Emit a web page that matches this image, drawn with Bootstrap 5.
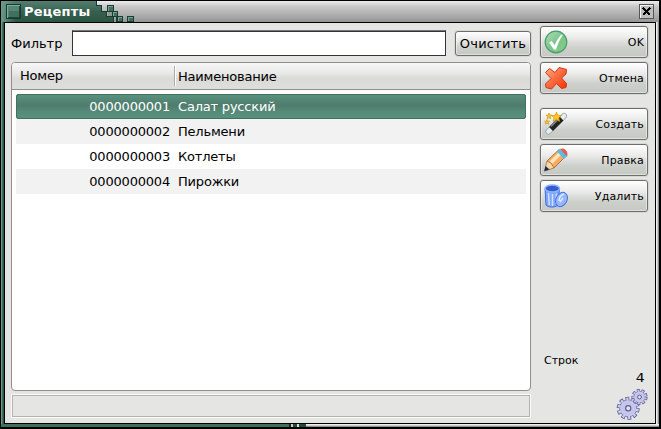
<!DOCTYPE html>
<html lang="ru">
<head>
<meta charset="utf-8">
<title>Рецепты</title>
<link href="https://cdn.jsdelivr.net/npm/bootstrap@5.3.0/dist/css/bootstrap.min.css" rel="stylesheet">
<style>
body{width:661px;height:429px;background:#000;overflow:hidden;font:13px/15px "DejaVu Sans",sans-serif;letter-spacing:-.2px;color:#000}
.win{width:661px;height:429px;padding:1px 2px 2px 1px}
.titlebar{height:21px;background:linear-gradient(#ededed 0,#c9c9c9 25%,#a4a4a4 80%,#959595)}
.titlebar-name{width:95px;padding-left:5px;background:linear-gradient(90deg,#6c9a8a,transparent 15px),linear-gradient(#547f70,#37604f 50%,#2c5445);color:#fff;font-weight:700;letter-spacing:.2px}
.menu-box{width:15px;height:15px;margin-right:3px}
.pixels{width:40px;height:21px}
.close-box{width:15px;height:15px;margin-right:5px}
.frame-l{width:3px;background:linear-gradient(90deg,#6a9a8a 1px,#41705f 1px 2px,#2d5647 2px)}
.frame-r{width:3px;background:linear-gradient(90deg,#eee 1px,#ccc 1px 2px,#8e8e8e 2px)}
.frame-b{height:3px;background:linear-gradient(90deg,#3f6f5e 288px,#222 288px 290px,#ccc 290px 292px,#234b3d 292px 296px,#ddd 296px 298px,#234b3d 298px 305px,transparent 305px),linear-gradient(#eee 1px,#ccc 1px 2px,#8e8e8e 2px)}
.client{height:402px;border:1px solid #000;background:#e5e5e3;padding:3px 7px 4px 6px}
.left-pane{width:520px;padding-top:4px}
.filter-label{letter-spacing:0}
.filter-input{width:374px;height:26px;margin-right:9px;border:1px solid #32333f;border-top-color:#777;background:#fff;outline:0;box-shadow:inset 0 1px #32333f}
.push{border:1px solid #6d706a;border-radius:3px;background:linear-gradient(#fff,#ebebea 35%,#cccfca 70%,#c6c9c3);box-shadow:inset 0 0 0 1px rgba(255,255,255,.45),0 0 0 1px rgba(0,0,0,.06);color:#000;padding:0}
.push-clear{width:76px;height:25px;letter-spacing:.2px}
.push-side{width:108px;height:32px;font-size:11px;padding:0 3px;letter-spacing:.15px}
.push-side svg{width:24px;height:24px}
.grid-box{width:520px;height:329px;margin-top:6px;border:1px solid #8f8f8c;border-radius:4px;background:#fff}
.grid-head{height:27px;background:linear-gradient(#f7f7f7,#e8e8e7 40%,#dadad8 60%,#dededc);border-bottom:1px solid #8f8f8c;border-radius:3px 3px 0 0}
.head-num{width:163px;padding-left:8px;border-right:1px solid #aaa;height:20px;line-height:20px;box-shadow:1px 0 #fff}
.head-name{padding-left:3px}
.grid-body{padding:4px}
.line{height:25px}
.line:nth-child(even){background:#f2f2f2}
.line-num{width:154px;text-align:right}
.line-name{padding-left:8px}
.line.picked{color:#fff;border-radius:3px;background:linear-gradient(#5a9380,#4f7c6c 45%,#568a79 70%,#5a9380);box-shadow:inset 0 0 0 1px #426f60}
.status{height:24px;margin-top:3px;border:1px solid #fbfbfb;box-shadow:inset 0 0 0 1px #b3b3b1}
.side{width:108px}
.actions{margin-top:14px}
.small-label{font-size:11px;padding-left:4px;margin-bottom:2px;letter-spacing:0}
.count{font-size:12.5px;padding-right:3px;margin-bottom:4px;transform:scaleX(1.12);transform-origin:right}
.gears{width:32px;height:32px;margin-bottom:-2px}
</style>
<script src="https://cdn.jsdelivr.net/npm/bootstrap@5.3.0/dist/js/bootstrap.bundle.min.js"></script>
</head>
<body>
<div class="win d-flex flex-column">
 <header class="titlebar d-flex align-items-center">
  <div class="titlebar-name d-flex align-items-center h-100">
   <svg class="menu-box" viewBox="0 0 15 15" shape-rendering="crispEdges"><path fill="#163a2e" d="M0 0h15v15H0z"/><path fill="#82ab9c" d="M1 1h13v13H1z"/><path fill="#1d4437" d="M2 2h12v12H2z"/><path fill="#548674" d="M2 2h11v11H2z"/><path fill="#41705f" d="M3 7h10v6H3z"/></svg>
   <span>Рецепты</span>
  </div>
  <svg class="pixels" viewBox="0 0 40 21" shape-rendering="crispEdges">
   <defs><linearGradient id="edge" x2="0" y2="1"><stop stop-color="#547f70"/><stop offset=".5" stop-color="#37604f"/><stop offset="1" stop-color="#2c5445"/></linearGradient></defs>
   <path fill="#173b2e" d="M0 0h1v4h5v6h5v5h7v6H0z"/>
   <path fill="url(#edge)" d="M0 0v21h17v-5h-7v-5H5V5H0z"/>
   <g fill="#193e30"><path d="M11 4h7v7h-7zM16 10h6v6h-6zM20 15h7v6h-7zM31 15h7v6h-7z"/></g>
   <path fill="#8e9793" d="M12 11h4v4h-4z"/>
   <g fill="#74a293"><path d="M12 5h5v5h-5zM17 11h4v4h-4zM22 16h4v4h-4zM32 16h5v4h-5z"/></g>
   <g fill="#41705f"><path d="M13 6h4v4h-4zM18 12h3v3h-3zM23 17h3v3h-3zM33 17h4v3h-4z"/></g>
  </svg>
  <svg class="close-box ms-auto" viewBox="0 0 15 15" shape-rendering="crispEdges"><path fill="#555" d="M0 0h15v15H0z"/><path fill="#f4f4f4" d="M1 1h13v13H1z"/><path fill="#bcbcbc" d="M2 2h12v12H2z"/><path stroke="#000" stroke-width="2.6" d="M4 4l7 7M11 4l-7 7"/></svg>
 </header>
 <div class="d-flex">
  <div class="frame-l"></div>
  <main class="client flex-grow-1 d-flex justify-content-between">
   <section class="left-pane">
    <div class="d-flex align-items-center">
     <label class="filter-label" for="filter">Фильтр</label>
     <input id="filter" class="filter-input ms-auto">
     <button class="push push-clear">Очистить</button>
    </div>
    <div class="grid-box">
     <div class="grid-head d-flex align-items-center"><div class="head-num">Номер</div><div class="head-name">Наименование</div></div>
     <div class="grid-body">
      <div class="line picked d-flex align-items-center"><div class="line-num">0000000001</div><div class="line-name">Салат русский</div></div>
      <div class="line d-flex align-items-center"><div class="line-num">0000000002</div><div class="line-name">Пельмени</div></div>
      <div class="line d-flex align-items-center"><div class="line-num">0000000003</div><div class="line-name">Котлеты</div></div>
      <div class="line d-flex align-items-center"><div class="line-num">0000000004</div><div class="line-name">Пирожки</div></div>
     </div>
    </div>
    <div class="status"></div>
   </section>
   <aside class="side d-flex flex-column">
    <div class="d-flex flex-column gap-1">
     <button class="push push-side d-flex align-items-center justify-content-between">
      <svg viewBox="0 0 24 24"><defs><linearGradient id="ok" x2="1" y2="1"><stop stop-color="#b4dfb9"/><stop offset=".5" stop-color="#79c58c"/><stop offset="1" stop-color="#8bca84"/></linearGradient></defs><circle cx="12" cy="12" r="10.8" fill="url(#ok)" stroke="#459c69" stroke-width="1.2"/><path fill="#fff" d="M5 12.5l2.800-1.600 2.800 4.400C12.500 10.500 14.500 7.500 17.500 4.500l1.200.5c-3 4.500-5 9-6.600 14.500H9.800z"/></svg>OK</button>
     <button class="push push-side d-flex align-items-center justify-content-between">
      <svg viewBox="0 0 24 24"><defs><linearGradient id="no" x2="1" y2="1"><stop stop-color="#ffb080"/><stop offset=".5" stop-color="#f96a3d"/><stop offset="1" stop-color="#ff3000"/></linearGradient></defs><path fill="url(#no)" stroke="#c83a1c" stroke-linejoin="round" d="M1.500 6.500L5.500 2.500l5.500 4L15 1.500 22.500 3.500 22 8l-4.500 4L22.500 17.500 22 21.500 17.500 22.500 12.500 17.500 7.500 23 2 21.500 1.500 18 7 12.500z"/></svg>Отмена</button>
    </div>
    <div class="actions d-flex flex-column gap-1">
     <button class="push push-side d-flex align-items-center justify-content-between">
      <svg viewBox="0 0 24 24"><path stroke="#8fa3ad" stroke-width="6" stroke-linecap="round" d="M4.500 19.500L20 4"/><path stroke="#e3edf2" stroke-width="4.500" stroke-linecap="round" d="M4.500 19.500L20 4"/><path stroke="#222" stroke-width="5.500" d="M7 17L17.500 6.500"/><path stroke="#888" stroke-width="1.500" d="M7 14.500L15 6.500"/><g fill="#ffc820" stroke="#c98c08" stroke-width=".6"><path d="M12.500 0l1.300 3.200 3.900.2-3 2.500 1 3.600-3.200-2-3.400 1.900 1-3.600L7.500 3.600l3.600-.3zM5 1l.8 2 2.200.2-1.700 1.400.5 2.200L5 5.600 3.100 6.800l.5-2.200L2 3.200 4.200 3zM3 7.500l.7 1.700 1.900.1-1.500 1.200.5 1.800L3 11.300l-1.600 1 .5-1.800L.5 9.300l1.800-.1z"/></g></svg>Создать</button>
     <button class="push push-side d-flex align-items-center justify-content-between">
      <svg viewBox="0 0 24 24"><path fill="#f6ac62" stroke="#985a2b" stroke-width=".8" d="M3 13L15 1.500l7.500 6L10 20z"/><path stroke="#ffe3b8" stroke-width="3.500" d="M7 14.500L17 4.500"/><path fill="#58bce9" d="M13 3.500L16 1 23.500 8l-3.500 3z"/><path fill="#e65b50" d="M16 1C18 0 20 .3 21.700 2S24 6 23 8.500z"/><path fill="#f5d6a8" stroke="#a96b35" stroke-width=".8" d="M3 13l4 2 3 5-9.500 3z"/><path fill="#172c52" d="M1.500 18L.3 23.200 5.500 21.500z"/></svg>Правка</button>
     <button class="push push-side d-flex align-items-center justify-content-between">
      <svg viewBox="0 0 24 24"><path fill="#7fa6fa" stroke="#416cdd" d="M1 4.500l1 16.500c2 2.500 9 3 12 0l1.500-16.500z"/><path stroke="#d0e1ff" stroke-width="1.500" d="M4.500 9l.8 12M8.500 10v12M12.500 9.500L12 20"/><ellipse cx="8.300" cy="4.500" rx="7.200" ry="3.500" fill="#355dcd" stroke="#8db4ff" stroke-width="1.500"/><ellipse cx="17.500" cy="15.500" rx="5.500" ry="7.500" transform="rotate(28 17.500 15.500)" fill="#94b8ff" stroke="#4974e0"/><path fill="none" stroke="#e0ebff" stroke-width="1.500" d="M15 17c0-4 2-6 5-7M16 18l3-4"/></svg>Удалить</button>
    </div>
    <div class="mt-auto d-flex flex-column">
     <span class="small-label">Строк</span>
     <span class="count align-self-end">4</span>
     <svg class="gears align-self-end" viewBox="0 0 32 32" fill="none">
      <circle cx="12.200" cy="19.300" r="9.500" stroke="#5c5c98" stroke-width="4" stroke-dasharray="3.700 2.269"/>
      <circle cx="12.200" cy="19.300" r="8.600" fill="#c6c6ec" stroke="#7575ad" stroke-width=".9"/>
      <circle cx="12.200" cy="19.300" r="9.200" stroke="#cdcdf0" stroke-width="3" stroke-dasharray="2.200 3.580" stroke-dashoffset="-.72"/>
      <circle cx="12.200" cy="19.300" r="2.600" fill="#e5e5e3" stroke="#5c5c98" stroke-width="1.200"/>
      <circle cx="23.500" cy="8" r="6.500" stroke="#5c5c98" stroke-width="3.200" stroke-dasharray="2.900 1.638"/>
      <circle cx="23.500" cy="8" r="5.700" fill="#c6c6ec" stroke="#7575ad" stroke-width=".8"/>
      <circle cx="23.500" cy="8" r="6.200" stroke="#cdcdf0" stroke-width="2.200" stroke-dasharray="1.600 2.728" stroke-dashoffset="-.62"/>
      <circle cx="23.500" cy="8" r="1.900" fill="#e5e5e3" stroke="#5c5c98"/>
     </svg>
    </div>
   </aside>
  </main>
  <div class="frame-r"></div>
 </div>
 <div class="frame-b"></div>
</div>
</body>
</html>
